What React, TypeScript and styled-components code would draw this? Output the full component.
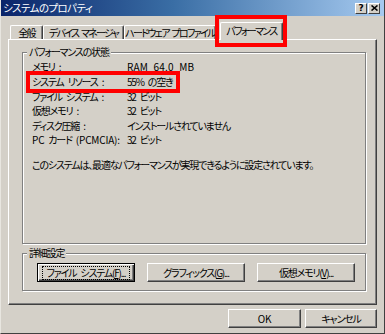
import * as React from 'react';
import styled, { createGlobalStyle } from 'styled-components';

const GlobalStyle = createGlobalStyle`
    html, body {
        margin: 0;
        padding: 0;
        background: #d4d0c8;
    }
    body {
        font-family: "Noto Sans CJK JP", "Noto Sans", sans-serif;
        font-size: 10px;
        letter-spacing: -1.2px;
        word-spacing: 3px;
        font-feature-settings: "palt";
        color: #000;
    }
`;

const Window = styled.div`
    width: 385px;
    height: 334px;
    box-sizing: border-box;
    background: #d4d0c8;
    border-right: 1px solid #404040;
    border-bottom: 1px solid #404040;
    border-left: 1px solid #e8e6e0;
    display: flex;
    flex-direction: column;
`;

const TitleBar = styled.div`
    height: 16px;
    flex: none;
    display: flex;
    align-items: center;
    justify-content: space-between;
    padding: 0 4px 0 2px;
    background: linear-gradient(90deg, #0a246a 0%, #3a6ea5 45%, #a6caf0 100%);
`;

const TitleText = styled.span`
    color: #fff;
    font-size: 10.5px;
    letter-spacing: -0.6px;
    line-height: 16px;
`;

const CaptionButtons = styled.div`
    display: flex;
    gap: 1px;
`;

const CaptionButton = styled.div`
    width: 12px;
    height: 11px;
    box-sizing: border-box;
    background: #d4d0c8;
    border-top: 1px solid #fff;
    border-left: 1px solid #fff;
    border-right: 1px solid #404040;
    border-bottom: 1px solid #404040;
    display: flex;
    align-items: center;
    justify-content: center;
    font-family: "DejaVu Sans", sans-serif;
    font-weight: bold;
    font-size: 9px;
    line-height: 9px;
    letter-spacing: 0;
`;

const Body = styled.div`
    flex: 1;
    display: flex;
    flex-direction: column;
    padding: 6px 7px 0 7px;
`;

const TabRow = styled.div`
    display: flex;
    align-items: flex-end;
    height: 17px;
    margin-left: 2px;
    position: relative;
    z-index: 2;
`;

const Tab = styled.div<{ $w: number; $active?: boolean }>`
    position: relative;
    width: ${p => p.$w}px;
    height: ${p => (p.$active ? 18 : 14)}px;
    margin-left: ${p => (p.$active ? 4 : 0)}px;
    margin-bottom: ${p => (p.$active ? -1 : 0)}px;
    box-sizing: border-box;
    background: #d4d0c8;
    border-top: 1px solid #fff;
    border-left: 1px solid #fff;
    border-right: 1px solid #404040;
    box-shadow: inset -1px 0 0 #808080;
    border-radius: 2px 2px 0 0;
    display: flex;
    align-items: ${p => (p.$active ? 'flex-start' : 'center')};
    padding-top: ${p => (p.$active ? 1 : 0)}px;
    justify-content: center;
    white-space: nowrap;
    line-height: 13px;
    letter-spacing: -1.7px;
    word-spacing: 2px;

    ${p =>
        p.$active &&
        `
        &::after {
            content: '';
            position: absolute;
            left: -6px;
            right: -5px;
            top: -8px;
            bottom: -7px;
            border: 4px solid #ff0000;
        }
    `}
`;

const Panel = styled.div`
    height: 266px;
    box-sizing: border-box;
    border-top: 1px solid #fff;
    border-left: 1px solid #fff;
    border-right: 1px solid #404040;
    border-bottom: 1px solid #404040;
    box-shadow: inset -1px -1px 0 #808080;
    padding: 5px 10px 0 13px;
    display: flex;
    flex-direction: column;
`;

const Group = styled.fieldset<{ $h: number }>`
    margin: 0;
    padding: 0;
    height: ${p => p.$h}px;
    box-sizing: border-box;
    min-width: 0;
    border: 1px solid #808080;
    box-shadow: inset 1px 1px 0 #fff, 1px 1px 0 #fff;
    & + & {
        margin-top: 2px;
    }
`;

const Legend = styled.legend`
    margin-left: 4px;
    padding: 0 2px;
    background: #d4d0c8;
    line-height: 14px;
    position: relative;
`;

const StatusList = styled.div`
    display: flex;
    flex-direction: column;
    padding: 1px 0 0 9px;
`;

const Row = styled.div<{ $marked?: boolean }>`
    position: relative;
    display: grid;
    grid-template-columns: 95px 1fr;
    height: 14px;
    line-height: 14px;
    margin-bottom: ${p => (p.$marked ? 1 : 0.2)}px;
    margin-top: ${p => (p.$marked ? 1 : 0)}px;
    white-space: nowrap;

    ${p =>
        p.$marked &&
        `
        &::after {
            content: '';
            position: absolute;
            left: -6px;
            top: -4px;
            width: 154px;
            bottom: -4px;
            box-sizing: border-box;
            border: 4px solid #ff0000;
        }
    `}
`;

const Label = styled.span``;
const Value = styled.span<{ $latin?: boolean }>`
    letter-spacing: ${p => (p.$latin ? '0.2px' : 'inherit')};
`;

const Latin = styled.span`
    letter-spacing: -0.2px;
`;

const Message = styled.div`
    margin-top: 11px;
    line-height: 14px;
    white-space: nowrap;
`;

const ButtonRow = styled.div`
    display: flex;
    gap: 12px;
    padding: 3px 0 0 14px;
`;

const Button = styled.div<{ $w: number; $default?: boolean }>`
    width: ${p => p.$w}px;
    height: 19px;
    box-sizing: border-box;
    background: #d4d0c8;
    border-top: 1px solid #fff;
    border-left: 1px solid #fff;
    border-right: 1px solid #404040;
    border-bottom: 1px solid #404040;
    box-shadow: inset -1px -1px 0 #808080;
    display: flex;
    align-items: center;
    justify-content: center;
    white-space: nowrap;
    line-height: 13px;
    ${p =>
        p.$default &&
        `
        border: 1px solid #000;
        box-shadow: inset 1px 1px 0 #fff, inset -1px -1px 0 #404040, inset -2px -2px 0 #808080;
    `}
`;

const Focus = styled.span`
    border: 1px dotted #000;
    width: 86px;
    text-align: center;
    line-height: 12px;
`;

const Footer = styled.div`
    display: flex;
    justify-content: flex-end;
    gap: 4px;
    padding-top: 4px;
`;

const rows: Array<[React.ReactNode, string, boolean?]> = [
    ['メモリ :', 'RAM 64.0 MB'],
    ['システム リソース :', '55% の空き', true],
    ['ファイル システム :', '32 ビット'],
    ['仮想メモリ :', '32 ビット'],
    ['ディスク圧縮 :', 'インストールされていません'],
    [<><Latin>PC</Latin> カード <Latin>(PCMCIA):</Latin></>, '32 ビット'],
];

export default function App() {
    return (
        <>
            <GlobalStyle />
            <Window>
                <TitleBar>
                    <TitleText>システムのプロパティ</TitleText>
                    <CaptionButtons>
                        <CaptionButton>?</CaptionButton>
                        <CaptionButton>
                            <svg width="7" height="6" viewBox="0 0 7 6">
                                <path d="M0.5 0.5 L6.5 5.5 M6.5 0.5 L0.5 5.5" stroke="#000" strokeWidth="1.6" />
                            </svg>
                        </CaptionButton>
                    </CaptionButtons>
                </TitleBar>
                <Body>
                    <TabRow>
                        <Tab $w={33}>全般</Tab>
                        <Tab $w={81}>デバイス マネージャ</Tab>
                        <Tab $w={92}>ハードウェア プロファイル</Tab>
                        <Tab $w={63} $active>パフォーマンス</Tab>
                    </TabRow>
                    <Panel>
                        <Group $h={199}>
                            <Legend>パフォーマンスの状態</Legend>
                            <StatusList>
                                {rows.map(([label, value, marked], i) => (
                                    <Row key={i} $marked={marked}>
                                        <Label>{label}</Label>
                                        <Value $latin={value.startsWith('RAM')}>{value}</Value>
                                    </Row>
                                ))}
                                <Message>このシステムは、最適なパフォーマンスが実現できるように設定されています。</Message>
                            </StatusList>
                        </Group>
                        <Group $h={45}>
                            <Legend>詳細設定</Legend>
                            <ButtonRow>
                                <Button $w={98} $default>
                                    <Focus>ファイル システム(<u>F</u>)...</Focus>
                                </Button>
                                <Button $w={98}>グラフィックス(<u>G</u>)...</Button>
                                <Button $w={98}>仮想メモリ(<u>V</u>)...</Button>
                            </ButtonRow>
                        </Group>
                    </Panel>
                    <Footer>
                        <Button $w={73}><Latin>OK</Latin></Button>
                        <Button $w={72}>キャンセル</Button>
                    </Footer>
                </Body>
            </Window>
        </>
    );
}
